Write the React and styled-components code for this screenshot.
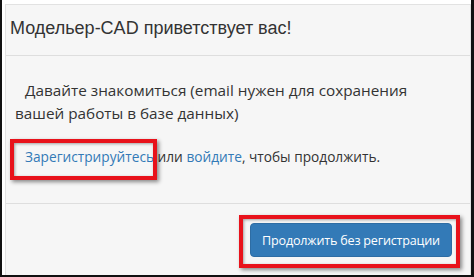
import React from "react";
import styled, { createGlobalStyle } from "styled-components";

const Global = createGlobalStyle`
  html, body {
    margin: 0;
    padding: 0;
    background: #ffffff;
  }
  * { box-sizing: border-box; }
`;

const Frame = styled.div`
  width: 474px;
  height: 277px;
  position: relative;
  background: #ffffff;
  border-left: 2px solid #111;
  border-right: 3px solid #111;
  border-bottom: 2px solid #111;
  padding: 4px 0 0 3px;
  overflow: hidden;
`;

const Modal = styled.div`
  height: 100%;
  background: #f6f6f6;
  border: 1px solid #e2e2e2;
  border-bottom: none;
  display: flex;
  flex-direction: column;
`;

const Header = styled.div`
  height: 51px;
  padding: 10px 0 0 4px;
  border-bottom: 1px solid #dedede;
`;

const Title = styled.h4`
  margin: 0;
  font-family: "Liberation Sans", Arial, sans-serif;
  font-weight: normal;
  font-size: 18px;
  line-height: 26px;
  color: #333;
`;

const Body = styled.div`
  flex: 0 0 148px;
  padding: 23px 40px 0 9px;
  border-bottom: 1px solid #dedede;
  font-family: "Open Sans", "Noto Sans", sans-serif;
  color: #333;
`;

const Intro = styled.p`
  margin: 0;
  font-size: 15.3px;
  line-height: 23px;
  text-indent: 10px;
`;

const LinkLine = styled.p`
  margin: 22px 0 0 10px;
  font-size: 13.7px;
  line-height: 20px;
  white-space: nowrap;
`;

const Link = styled.a`
  color: #337ab7;
  text-decoration: none;
`;

const Footer = styled.div`
  flex: 1;
  display: flex;
  justify-content: flex-end;
  align-items: flex-start;
  padding: 19px 18px 0 0;
`;

const Button = styled.button`
  width: 202px;
  height: 34px;
  border: 1px solid #2e6da4;
  border-radius: 4px;
  background: #337ab7;
  color: #fff;
  font-family: "Open Sans", "Noto Sans", sans-serif;
  font-size: 12.6px;
  letter-spacing: -0.2px;
  padding: 0;
`;

const Highlight = styled.div`
  position: absolute;
  left: ${p => p.x}px;
  top: ${p => p.y}px;
  width: ${p => p.w}px;
  height: ${p => p.h}px;
  border: 4px solid #e8121b;
  box-shadow: 2px 2px 4px rgba(0, 0, 0, 0.45), inset 1px 1px 3px rgba(0, 0, 0, 0.35);
  pointer-events: none;
`;

export default function App() {
  return (
    <>
      <Global />
      <Frame>
        <Modal>
          <Header>
            <Title>Модельер-CAD приветствует вас!</Title>
          </Header>
          <Body>
            <Intro>
              Давайте знакомиться (email нужен для сохранения вашей работы в
              базе данных)
            </Intro>
            <LinkLine>
              <Link href="#">Зарегистрируйтесь</Link> или{" "}
              <Link href="#">войдите</Link>, чтобы продолжить.
            </LinkLine>
          </Body>
          <Footer>
            <Button>Продолжить без регистрации</Button>
          </Footer>
        </Modal>
        <Highlight x={8} y={139} w={147} h={41} />
        <Highlight x={237} y={215} w={221} h={53} />
      </Frame>
    </>
  );
}
